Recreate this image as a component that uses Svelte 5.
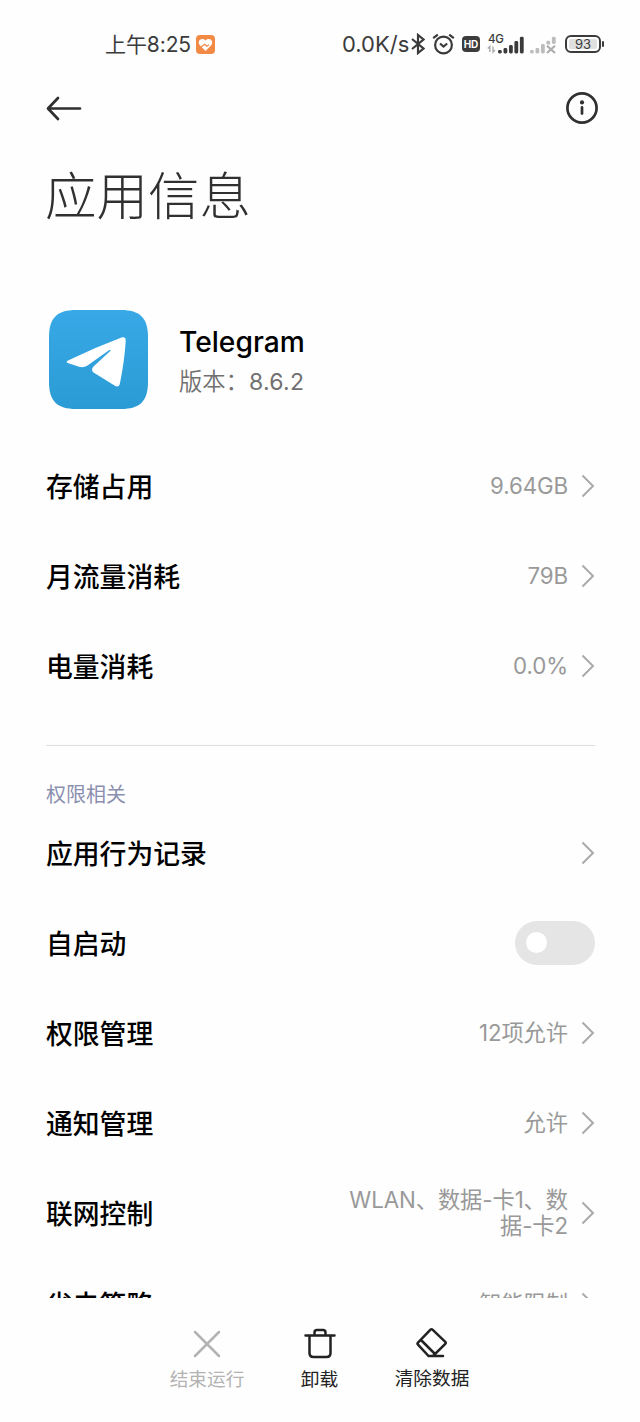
<script lang="ts">
  interface Item {
    title: string;
    value?: string;
    toggle?: boolean;
  }

  const usage: Item[] = [
    { title: '存储占用', value: '9.64GB' },
    { title: '月流量消耗', value: '79B' },
    { title: '电量消耗', value: '0.0%' },
  ];

  const permissions: Item[] = [
    { title: '应用行为记录' },
    { title: '自启动', toggle: true },
    { title: '权限管理', value: '12项允许' },
    { title: '通知管理', value: '允许' },
    { title: '联网控制', value: 'WLAN、数据-卡1、数据-卡2' },
    { title: '省电策略', value: '智能限制' },
  ];

  let autoStart = $state(false);
</script>

{#snippet row(item: Item)}
  <div class="row">
    <span class="row-title">{item.title}</span>
    {#if item.toggle}
      <button
        class="switch"
        class:on={autoStart}
        aria-label={item.title}
        onclick={() => (autoStart = !autoStart)}
      >
        <span class="knob"></span>
      </button>
    {:else}
      <span class="row-value">{item.value ?? ''}</span>
      <svg class="chevron" width="14" height="24" viewBox="0 0 14 24">
        <path d="M1.5 1.5 L12 12 L1.5 22.5" />
      </svg>
    {/if}
  </div>
{/snippet}

<div class="screen">
  <div class="scroll">
    <div class="status">
      <span class="time">上午8:25</span>
      <svg class="health" width="19" height="19" viewBox="0 0 19 19">
        <rect width="19" height="19" rx="4" fill="#f28a45" />
        <path d="M9.5 16 L3.6 10 C0.8 6 5.5 1.8 9.5 5.4 C13.5 1.8 18.2 6 15.4 10 Z" fill="#fff" />
        <path d="M5 12 L8.5 9.3 L10.8 11.3 L13 9.8" fill="none" stroke="#f28a45" stroke-width="1.2" />
      </svg>
      <span class="speed">0.0K/s</span>
      <svg class="bluetooth" width="14" height="22" viewBox="0 0 14 22">
        <path d="M1 6 L12.5 15.5 L7 20 V2 L12.5 6.5 L1 16" />
      </svg>
      <svg class="alarm" width="23" height="22" viewBox="0 0 23 22">
        <circle cx="11.5" cy="12" r="8.4" />
        <path d="M1.2 5.2 L5.8 1.6 M21.8 5.2 L17.2 1.6 M8 10.5 L11.5 13.5 L15.2 10.5" />
      </svg>
      <span class="hd">HD</span>
      <div class="network">
        <span class="net-type">4G</span>
        <svg width="68" height="21" viewBox="0 0 68 21">
          <path d="M1.8 18 V12.5 L-0.2 14.5 M5 12.5 V18 L7 16" fill="none" stroke="#aaa" stroke-width="1.4" />
          <g fill="#3b3b3b">
            <rect x="10" y="16" width="3.8" height="3.4" rx="1.4" />
            <rect x="15.5" y="14" width="3.8" height="5.4" rx="1.4" />
            <rect x="21" y="11" width="3.8" height="8.4" rx="1.4" />
            <rect x="26.4" y="7" width="3.8" height="12.4" rx="1.4" />
            <rect x="31.9" y="2.8" width="3.8" height="16.6" rx="1.4" />
          </g>
          <g fill="#bdbdbd">
            <rect x="42" y="16" width="3.8" height="3.4" rx="1.4" />
            <rect x="47.5" y="14" width="3.8" height="5.4" rx="1.4" />
            <rect x="53" y="10" width="3.8" height="9.4" rx="1.4" />
            <rect x="58.4" y="6.8" width="3.8" height="3.8" rx="1.2" />
            <rect x="63.9" y="2.8" width="3.8" height="7.2" rx="1.4" />
          </g>
          <path d="M59 11.8 L67 19 M67 11.8 L59 19" stroke="#adadad" stroke-width="2.2" />
        </svg>
      </div>
      <div class="battery"><span>93</span></div>
    </div>

    <div class="toolbar">
      <svg width="36" height="26" viewBox="0 0 36 26">
        <path d="M34 13.5 H2.5 M12 3 L2 13.5 L12 24" />
      </svg>
      <svg width="34" height="34" viewBox="0 0 34 34">
        <circle cx="17" cy="17" r="14.6" />
        <path d="M17 16.4 V22.6" />
        <circle class="dot" cx="17" cy="11.4" r="2.1" />
      </svg>
    </div>

    <h1>应用信息</h1>

    <div class="app">
      <svg width="99" height="99" viewBox="0 0 99 99">
        <defs>
          <linearGradient id="sky" x1="0" y1="0" x2="0" y2="1">
            <stop offset="0" stop-color="#38a9e6" />
            <stop offset="1" stop-color="#2b9bd5" />
          </linearGradient>
        </defs>
        <path d="M27 0 H72 C91 0 99 8 99 27 V72 C99 91 91 99 72 99 H27 C8 99 0 91 0 72 V27 C0 8 8 0 27 0 Z" fill="url(#sky)" />
        <path
          d="M19 50.4 Q45 38 72.5 27.6 Q77 26.3 76.7 31 Q75.5 51 71 73 Q70 78.5 65.5 75.5 L44.5 62.5 Q41.5 60 44.5 56.5 L61.5 40.8 Q62 39.3 60 40.2 L38.5 55.5 Q34.5 58 30 56.7 L19.5 53.2 Q16.2 52 19 50.4 Z"
          fill="#fff"
        />
      </svg>
      <div class="app-text">
        <span class="app-name">Telegram</span>
        <span class="version">版本：<span class="number">8.6.2</span></span>
      </div>
    </div>

    {#each usage as item}
      {@render row(item)}
    {/each}

    <div class="divider"></div>
    <h2>权限相关</h2>

    {#each permissions as item}
      {@render row(item)}
    {/each}
  </div>

  <div class="actions">
    <div class="action disabled">
      <svg width="34" height="34" viewBox="0 0 34 34">
        <path d="M5 5 L29 29 M29 5 L5 29" />
      </svg>
      <span>结束运行</span>
    </div>
    <div class="action">
      <svg width="34" height="34" viewBox="0 0 34 34">
        <path d="M2.5 8.5 H31.5 M6.5 8.5 V26 Q6.5 30 10.5 30 H23.5 Q27.5 30 27.5 26 V8.5 M11.5 8 V5.5 Q11.5 3 14 3 H20 Q22.5 3 22.5 5.5 V8" />
      </svg>
      <span>卸载</span>
    </div>
    <div class="action clear">
      <svg width="34" height="34" viewBox="0 0 34 34">
        <path d="M3 15.7 L15.5 2.7 Q16.5 1.7 17.5 2.7 L30.3 14.8 Q31.3 15.8 30.3 16.8 L18 29 H13.5 L3 17.7 Q2 16.7 3 15.7 Z M6 13 L20 27 M13.5 29 H28" />
      </svg>
      <span>清除数据</span>
    </div>
  </div>
</div>

<style>
  :global(body) {
    background: #fefefe;
  }

  .screen {
    width: 640px;
    height: 1422px;
    overflow: hidden;
    background: #fefefe;
    color: #000;
    font-family: Inter, 'Noto Sans CJK SC', sans-serif;
  }

  .scroll {
    height: 1298px;
    overflow: hidden;
  }

  .status {
    display: flex;
    align-items: center;
    height: 76px;
    padding: 12px 39px 0 105px;
    box-sizing: border-box;
    color: #3b3b3b;
    white-space: nowrap;
  }

  .status svg {
    flex: none;
  }

  .time {
    width: 86px;
    padding-bottom: 2px;
    font-size: 21px;
    letter-spacing: -0.1px;
  }

  .health {
    margin-left: 5px;
  }

  .speed {
    width: 69px;
    margin-left: auto;
    font-size: 22px;
  }

  .bluetooth,
  .alarm {
    fill: none;
    stroke: #3b3b3b;
    stroke-width: 2.2;
  }

  .bluetooth {
    margin-left: 0;
  }

  .alarm {
    margin-left: 7px;
  }

  .hd {
    width: 18px;
    height: 16px;
    margin-left: 7px;
    border-radius: 4px;
    background: #3b3b3b;
    color: #fff;
    font: 700 10px/16px Inter, sans-serif;
    text-align: center;
  }

  .network {
    position: relative;
    height: 21px;
    margin-left: 8px;
  }

  .network svg {
    overflow: visible;
  }

  .net-type {
    position: absolute;
    top: -2px;
    left: 0;
    font: 500 11.5px/14px Inter, sans-serif;
    letter-spacing: -0.3px;
  }

  .battery {
    position: relative;
    display: flex;
    width: 36px;
    height: 18px;
    margin-left: 9px;
    padding: 2px;
    box-sizing: border-box;
    border: 2px solid #3b3b3b;
    border-radius: 6px;
  }

  .battery span {
    flex: 1;
    border-radius: 2px;
    background: #e0e0e0;
    font: 400 13px/11px Inter, sans-serif;
    text-align: center;
  }

  .battery::after {
    content: '';
    position: absolute;
    top: 4px;
    right: -5px;
    width: 2px;
    height: 6px;
    border-radius: 1px;
    background: #3b3b3b;
  }

  .toolbar {
    display: flex;
    align-items: center;
    justify-content: space-between;
    height: 64px;
    padding: 0 41px 0 46px;
  }

  .toolbar svg {
    fill: none;
    stroke: #303030;
    stroke-width: 2.7;
    stroke-linecap: round;
    stroke-linejoin: round;
  }

  .toolbar .dot {
    fill: #303030;
    stroke: none;
  }

  h1 {
    height: 110px;
    margin: 0 0 60px 45px;
    color: #303030;
    font: 300 51.5px/106px 'Noto Sans CJK SC', sans-serif;
  }

  .app {
    display: flex;
    height: 99px;
    margin: 0 0 32px 49px;
    gap: 31px;
  }

  .app-text {
    display: flex;
    flex-direction: column;
    padding-top: 12px;
  }

  .app-name {
    height: 39px;
    font: 500 28.2px/40px Inter, sans-serif;
  }

  .version {
    height: 40px;
    color: #707070;
    font: 350 23.3px/38px 'Noto Sans CJK SC', sans-serif;
  }

  .number {
    font: 400 23px/38px Inter, sans-serif;
    letter-spacing: 0.3px;
  }

  .row {
    display: flex;
    align-items: center;
    height: 90.2px;
    margin: 0 45px 0 46px;
  }

  .row-title {
    flex: 1;
    font: 500 26.8px/36px 'Noto Sans CJK SC', sans-serif;
  }

  .row-value {
    width: 224px;
    color: #999;
    font: 400 22.3px/26px Inter, 'Noto Sans CJK SC', sans-serif;
    letter-spacing: -0.1px;
    text-align: right;
  }

  .chevron {
    margin-left: 13px;
    fill: none;
    stroke: #aaa;
    stroke-width: 2;
  }

  .switch {
    display: flex;
    align-items: center;
    width: 80px;
    height: 44px;
    padding: 0 11px;
    border: 0;
    border-radius: 22px;
    background: #e5e5e5;
  }

  .switch.on {
    justify-content: flex-end;
    background: #3482ff;
  }

  .knob {
    width: 21px;
    height: 21px;
    border-radius: 50%;
    background: #fff;
  }

  .divider {
    height: 1px;
    margin: 33px 45px 33px 46px;
    background: #dedede;
  }

  h2 {
    height: 29px;
    margin: 0 0 0 46px;
    color: #8b8fb0;
    font: 400 20px/30px 'Noto Sans CJK SC', sans-serif;
  }

  .actions {
    display: flex;
    justify-content: center;
    height: 124px;
    margin-right: 1px;
    padding-top: 29px;
    box-sizing: border-box;
  }

  .action {
    display: flex;
    flex-direction: column;
    align-items: center;
    width: 112.5px;
    color: #222;
    font: 400 18.7px/34px 'Noto Sans CJK SC', sans-serif;
  }

  .action svg {
    fill: none;
    stroke: currentColor;
    stroke-width: 2.5;
    stroke-linecap: round;
    stroke-linejoin: round;
  }

  .disabled {
    color: #b3b3b3;
  }

  .clear span {
    margin-top: -1px;
  }
</style>
